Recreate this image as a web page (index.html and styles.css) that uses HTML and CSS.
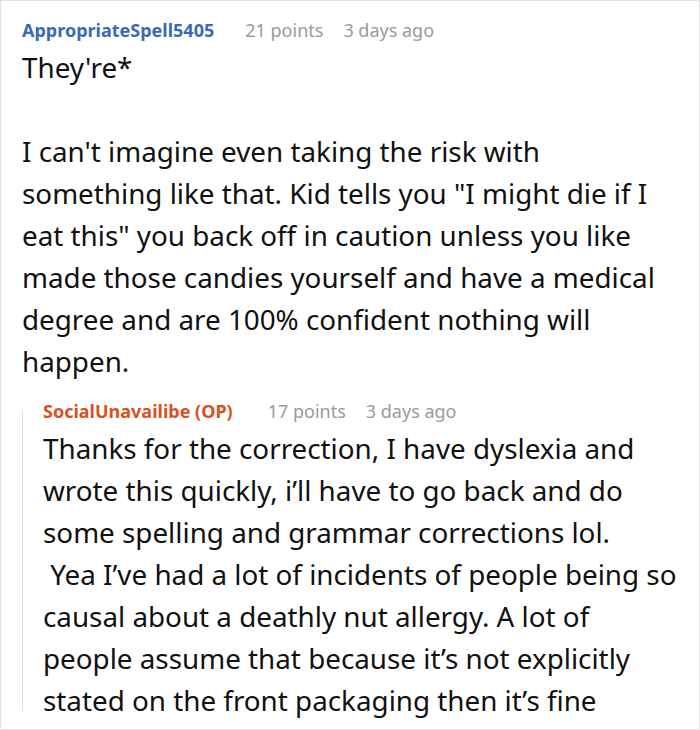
FILE: index.html
```html
<!DOCTYPE html>
<html>
<head>
<meta charset="utf-8">
<link rel="stylesheet" href="styles.css">
</head>
<body>
<div class="frame">
  <div class="comment">
    <div class="meta">
      <span class="user">AppropriateSpell5405</span>
      <span class="info">21 points</span>
      <span class="info">3 days ago</span>
    </div>
    <div class="text">They're*<br><br>I can't imagine even taking the risk with something like that. Kid tells you "I might die if I eat this" you back off in caution unless you like made those candies yourself and have a medical degree and are 100% confident nothing will happen.</div>
    <div class="reply">
      <div class="meta">
        <span class="user op">SocialUnavailibe (OP)</span>
        <span class="info">17 points</span>
        <span class="info">3 days ago</span>
      </div>
      <div class="text">Thanks for the correction, I have dyslexia and wrote this quickly, i’ll have to go back and do some spelling and grammar corrections lol.<br>&nbsp;Yea I’ve had a lot of incidents of people being so causal about a deathly nut allergy. A lot of people assume that because it’s not explicitly stated on the front packaging then it’s fine</div>
    </div>
  </div>
</div>
</body>
</html>
```
FILE: styles.css
```css
html, body {
  margin: 0;
  padding: 0;
  background: #fff;
}
.frame {
  width: 700px;
  height: 730px;
  box-sizing: border-box;
  border: 1px solid #e2e2e2;
  overflow: hidden;
  font-family: "Noto Sans", sans-serif;
}
.comment {
  padding: 17px 17px 0 21px;
}
.meta {
  display: flex;
  gap: 20px;
  font-size: 18px;
  line-height: 24px;
}
.user {
  font-weight: bold;
  color: #3a6ab6;
  margin-right: 11px;
}
.user.op {
  color: #d6521f;
  margin-right: 15px;
}
.info {
  color: #9a9a9a;
}
.text {
  font-size: 27.8px;
  line-height: 42px;
  color: #111;
  margin-top: 4px;
}
.reply {
  position: relative;
  margin-top: 17px;
  padding-left: 21px;
}
.reply::before {
  content: "";
  position: absolute;
  left: 0;
  top: 11px;
  bottom: 10px;
  width: 1px;
  background: #e2e2e2;
}
```
